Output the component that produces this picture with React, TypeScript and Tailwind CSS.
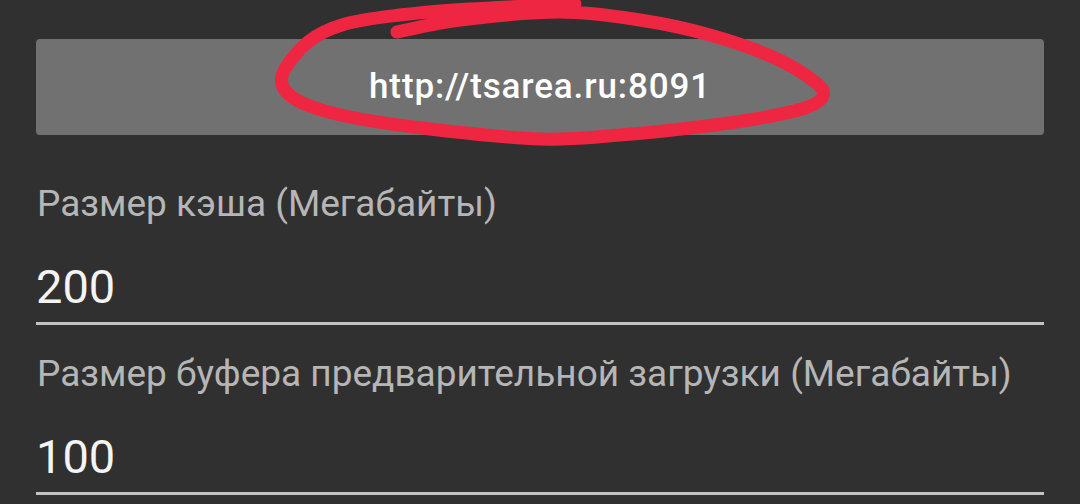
import React from "react";

type Pt = [number, number];

// hand-drawn marker loop round the address button
const LOOP: Pt[] = [
  [397, 32],
  [460, 20],
  [560, 12],
  [640, 20],
  [710, 35],
  [775, 58],
  [815, 82],
  [823, 96],
  [805, 108],
  [755, 119],
  [690, 128],
  [620, 135],
  [540, 139],
  [430, 129],
  [345, 116],
  [295, 99],
  [282, 76],
  [308, 42],
  [345, 24],
  [400, 15],
  [470, 9],
  [575, 4],
];

function smoothPath(pts: Pt[]) {
  let d = `M${pts[0][0]},${pts[0][1]}`;
  for (let i = 0; i < pts.length - 1; i++) {
    const p0 = pts[i - 1] ?? pts[i];
    const p1 = pts[i];
    const p2 = pts[i + 1];
    const p3 = pts[i + 2] ?? p2;
    const c1x = p1[0] + (p2[0] - p0[0]) / 6;
    const c1y = p1[1] + (p2[1] - p0[1]) / 6;
    const c2x = p2[0] - (p3[0] - p1[0]) / 6;
    const c2y = p2[1] - (p3[1] - p1[1]) / 6;
    d += ` C${c1x},${c1y} ${c2x},${c2y} ${p2[0]},${p2[1]}`;
  }
  return d;
}

function Field({ label, value }: { label: string; value: string }) {
  return (
    <div className="flex flex-col">
      <div className="text-[37px] leading-[43px] text-[#b6b6b6] pl-[1px]">{label}</div>
      <div className="mt-[34px] text-[47px] leading-[55px] text-[#f4f4f4]">{value}</div>
      <div className="mt-[8px] h-[3px] bg-[#c2c2c2]" />
    </div>
  );
}

export default function App() {
  return (
    <div
      className="relative h-[504px] w-[1080px] overflow-hidden bg-[#303030] px-[36px] pt-[39px]"
      style={{ fontFamily: "Roboto, 'Noto Sans', sans-serif" }}
    >
      <div className="flex h-[96px] items-center justify-center rounded-[4px] bg-[#717171]">
        <span className="text-[35px] font-medium tracking-[0.025em] text-white">http://tsarea.ru:8091</span>
      </div>

      <div className="mt-[47px] flex flex-col gap-[27px]">
        <Field label="Размер кэша (Мегабайты)" value="200" />
        <Field label="Размер буфера предварительной загрузки (Мегабайты)" value="100" />
      </div>

      <svg
        className="pointer-events-none absolute left-0 top-0"
        width={1080}
        height={504}
        viewBox="0 0 1080 504"
      >
        <path
          d={smoothPath(LOOP)}
          fill="none"
          stroke="#ef2641"
          strokeWidth={13}
          strokeLinecap="round"
          strokeLinejoin="round"
        />
      </svg>
    </div>
  );
}
